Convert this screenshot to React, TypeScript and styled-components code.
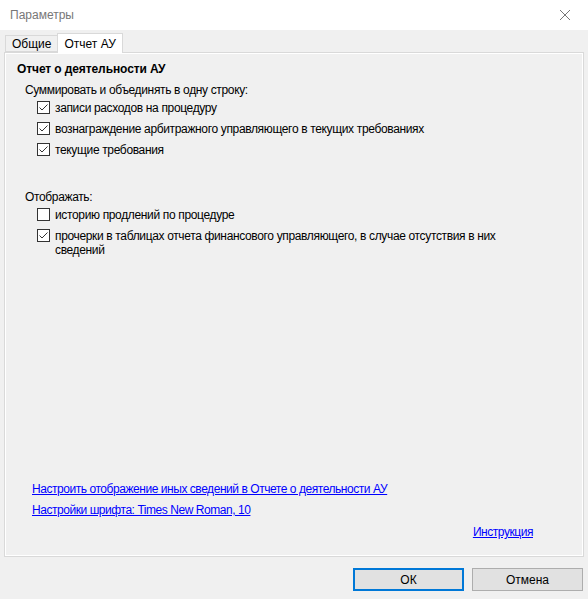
import styled, { createGlobalStyle } from 'styled-components'

const GlobalStyle = createGlobalStyle`
    html, body {
        margin: 0;
        padding: 0;
        background: #f0f0f0;
    }
    * {
        box-sizing: border-box;
    }
`

const Window = styled.div`
    display: flex;
    flex-direction: column;
    width: 588px;
    height: 599px;
    background: #f0f0f0;
    font-family: "Liberation Sans", Arial, sans-serif;
    font-size: 12px;
    letter-spacing: -0.35px;
    color: #000;
    overflow: hidden;
`

const TitleBar = styled.div`
    display: flex;
    align-items: center;
    justify-content: space-between;
    height: 30px;
    padding-left: 10px;
    background: #fff;
    color: #777;
    letter-spacing: 0;
`

const CloseButton = styled.div`
    display: flex;
    align-items: center;
    justify-content: center;
    width: 46px;
    height: 30px;
`

const Body = styled.div`
    flex: 1;
    display: flex;
    flex-direction: column;
    padding: 3px 4px 8px 4px;
`

const TabStrip = styled.div`
    display: flex;
    align-items: flex-end;
    height: 19px;
    padding-left: 1px;
    position: relative;
    z-index: 1;
`

const Tab = styled.div<{ $active?: boolean }>`
    display: flex;
    align-items: center;
    height: ${p => p.$active ? '20px' : '17px'};
    padding: 0 6px;
    margin-bottom: ${p => p.$active ? '-1px' : '0'};
    margin-right: ${p => p.$active ? '0' : '-1px'};
    background: ${p => p.$active ? '#fff' : '#f0f0f0'};
    border: 1px solid #d9d9d9;
    border-bottom: ${p => p.$active ? 'none' : '1px solid #d9d9d9'};
    letter-spacing: 0;
`

const Page = styled.div`
    flex: 1;
    display: flex;
    flex-direction: column;
    border: 1px solid #d9d9d9;
    box-shadow: inset 0 0 0 1px #fff;
    padding: 8px 12px 16px 12px;
`

const Heading = styled.div`
    font-weight: bold;
    line-height: 16px;
    margin-bottom: 5px;
    letter-spacing: -0.1px;
`

const Group = styled.div`
    display: flex;
    flex-direction: column;
    padding-left: 8px;
    & + & {
        margin-top: 32px;
    }
`

const GroupLabel = styled.div`
    line-height: 16px;
`

const OptionList = styled.div`
    display: flex;
    flex-direction: column;
    gap: 6px;
    padding-left: 12px;
    margin-top: 2px;
`

const Option = styled.label`
    display: flex;
    align-items: flex-start;
    gap: 5px;
    line-height: 14px;
    padding-top: 1px;
`

const OptionText = styled.span`
    max-width: 470px;
`

const Box = styled.span`
    flex: none;
    display: flex;
    align-items: center;
    justify-content: center;
    width: 13px;
    height: 13px;
    background: #fff;
    border: 1px solid #333;
`

const Footer = styled.div`
    margin-top: auto;
    display: flex;
    flex-direction: column;
    gap: 5px;
    padding-left: 15px;
`

const Link = styled.a`
    color: #0000ff;
    text-decoration: underline;
    line-height: 16px;
    letter-spacing: -0.45px;
    cursor: pointer;
`

const RightLink = styled(Link)`
    align-self: flex-end;
    margin-right: 38px;
    margin-top: 1px;
`

const ButtonRow = styled.div`
    display: flex;
    justify-content: flex-end;
    gap: 8px;
    padding-top: 11px;
    padding-right: 1px;
`

const DialogButton = styled.button<{ $default?: boolean }>`
    width: 111px;
    height: 23px;
    font-family: inherit;
    font-size: 12px;
    color: #000;
    background: #e1e1e1;
    border: 1px solid ${p => p.$default ? '#0078d7' : '#adadad'};
    box-shadow: ${p => p.$default ? 'inset 0 0 0 1px #0078d7' : 'none'};
    padding: 0;
`

const CheckMark = () => (
    <svg width="11" height="11" viewBox="0 0 11 11">
        <path d="M1.5 5.5 L4 8 L9.5 2.5" fill="none" stroke="#333" strokeWidth="1" />
    </svg>
)

type CheckProps = {
    checked?: boolean,
    children: React.ReactNode
}

const Check = ({ checked, children }: CheckProps) => (
    <Option>
        <Box>{checked && <CheckMark />}</Box>
        <OptionText>{children}</OptionText>
    </Option>
)

export default function App() {
    return (
        <Window>
            <GlobalStyle />
            <TitleBar>
                <span>Параметры</span>
                <CloseButton>
                    <svg width="10" height="10" viewBox="0 0 10 10">
                        <path d="M0 0 L10 10 M10 0 L0 10" stroke="#777" strokeWidth="1" />
                    </svg>
                </CloseButton>
            </TitleBar>
            <Body>
                <TabStrip>
                    <Tab>Общие</Tab>
                    <Tab $active>Отчет АУ</Tab>
                </TabStrip>
                <Page>
                    <Heading>Отчет о деятельности АУ</Heading>
                    <Group>
                        <GroupLabel>Суммировать и объединять в одну строку:</GroupLabel>
                        <OptionList>
                            <Check checked>записи расходов на процедуру</Check>
                            <Check checked>вознаграждение арбитражного управляющего в текущих требованиях</Check>
                            <Check checked>текущие требования</Check>
                        </OptionList>
                    </Group>
                    <Group>
                        <GroupLabel>Отображать:</GroupLabel>
                        <OptionList>
                            <Check>историю продлений по процедуре</Check>
                            <Check checked>прочерки в таблицах отчета финансового управляющего, в случае отсутствия в них сведений</Check>
                        </OptionList>
                    </Group>
                    <Footer>
                        <Link>Настроить отображение иных сведений в Отчете о деятельности АУ</Link>
                        <Link>Настройки шрифта: Times New Roman, 10</Link>
                        <RightLink>Инструкция</RightLink>
                    </Footer>
                </Page>
                <ButtonRow>
                    <DialogButton $default>ОК</DialogButton>
                    <DialogButton>Отмена</DialogButton>
                </ButtonRow>
            </Body>
        </Window>
    )
}
